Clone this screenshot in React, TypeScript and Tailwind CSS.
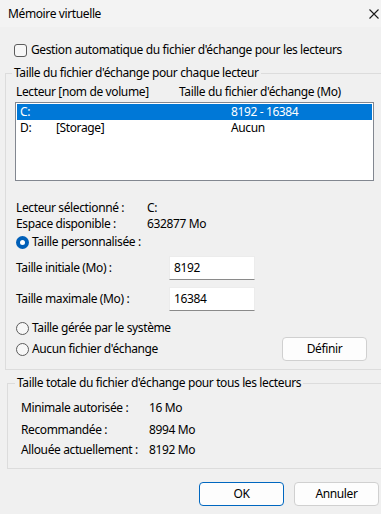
import React from 'react';

const font = { fontFamily: '"Segoe UI", "Noto Sans", "Liberation Sans", sans-serif' };

function Radio({ checked }: { checked?: boolean }) {
  if (checked) {
    return (
      <span className="flex h-[13px] w-[13px] items-center justify-center rounded-full bg-[#005fb8]">
        <span className="h-[5px] w-[5px] rounded-full bg-white" />
      </span>
    );
  }
  return <span className="h-[13px] w-[13px] rounded-full border border-[#5c5c5c] bg-[#f7f7f7]" />;
}

function Button({ label, primary }: { label: string; primary?: boolean }) {
  return (
    <button
      className={
        primary
          ? 'h-[24px] w-[85px] rounded-[4px] border border-[#0067c0] bg-[#fdfdfd] text-[12px] text-black'
          : 'h-[24px] w-[85px] rounded-[4px] border border-[#d0d0d0] bg-[#fdfdfd] text-[12px] text-black'
      }
    >
      {label}
    </button>
  );
}

export default function App() {
  return (
    <div
      className="h-[514px] w-[381px] overflow-hidden bg-[#f0f0f0] text-[12px] leading-[16px] tracking-[-0.38px] text-black"
      style={font}
    >
      {/* title bar */}
      <div className="flex h-[27px] items-center justify-between bg-[#f3f3f3] pl-[8px] pr-[1px]">
        <span>Mémoire virtuelle</span>
        <svg width="10" height="10" viewBox="0 0 10 10" className="mr-[1px]">
          <path d="M0.5 0.5 L9.5 9.5 M9.5 0.5 L0.5 9.5" stroke="#1a1a1a" strokeWidth="1.1" />
        </svg>
      </div>

      {/* auto checkbox */}
      <div className="ml-[14px] mt-[15px] flex h-[16px] items-center gap-[4px]">
        <span className="h-[13px] w-[13px] rounded-[3px] border border-[#5c5c5c] bg-[#f7f7f7]" />
        <span>Gestion automatique du fichier d'échange pour les lecteurs</span>
      </div>

      {/* per drive group */}
      <fieldset className="ml-[5px] mt-[7px] h-[305px] w-[381px] border border-[#dcdcdc]">
        <legend className="ml-[6px] px-[2px]">Taille du fichier d'échange pour chaque lecteur</legend>
        <div className="mt-[3px] flex pl-[10px]">
          <span className="w-[163px]">Lecteur [nom de volume]</span>
          <span>Taille du fichier d'échange (Mo)</span>
        </div>
        <div className="ml-[9px] mt-[2px] h-[79px] w-[359px] border border-[#828790] bg-white p-[1px]">
          <div className="flex h-[16px] items-center bg-[#0078d7] pl-[3px] text-white">
            <span className="w-[211px]">C:</span>
            <span>8192 - 16384</span>
          </div>
          <div className="flex h-[16px] items-center pl-[3px]">
            <span className="w-[36px]">D:</span>
            <span className="w-[175px]">[Storage]</span>
            <span>Aucun</span>
          </div>
        </div>

        <div className="ml-[10px] mt-[19px] flex">
          <span className="w-[131px]">Lecteur sélectionné :</span>
          <span>C:</span>
        </div>
        <div className="ml-[10px] flex">
          <span className="w-[131px]">Espace disponible :</span>
          <span>632877 Mo</span>
        </div>
        <div className="ml-[10px] mt-[2px] flex items-center gap-[3px]">
          <Radio checked />
          <span>Taille personnalisée :</span>
        </div>

        <div className="ml-[10px] mt-[6px] flex items-center">
          <span className="w-[153px]">Taille initiale (Mo) :</span>
          <div className="flex h-[24px] w-[86px] items-center border border-[#ececec] border-b-[#8a8a8a] bg-white pl-[4px]">8192</div>
        </div>
        <div className="ml-[10px] mt-[7px] flex items-center">
          <span className="w-[153px]">Taille maximale (Mo) :</span>
          <div className="flex h-[24px] w-[86px] items-center border border-[#ececec] border-b-[#8a8a8a] bg-white pl-[4px]">16384</div>
        </div>

        <div className="ml-[10px] mt-[9px] flex items-center gap-[3px]">
          <Radio />
          <span>Taille gérée par le système</span>
        </div>
        <div className="ml-[10px] mt-[1px] flex h-[24px] w-[351px] items-center">
          <div className="flex flex-1 items-center gap-[3px]">
            <Radio />
            <span>Aucun fichier d'échange</span>
          </div>
          <Button label="Définir" />
        </div>
      </fieldset>

      {/* totals group */}
      <fieldset className="ml-[7px] mt-[5px] h-[94px] w-[381px] border border-[#dcdcdc]">
        <legend className="ml-[7px] px-[2px]">Taille totale du fichier d'échange pour tous les lecteurs</legend>
        <div className="ml-[13px] mt-[9px] flex">
          <span className="w-[128px]">Minimale autorisée :</span>
          <span>16 Mo</span>
        </div>
        <div className="ml-[13px] mt-[6px] flex">
          <span className="w-[128px]">Recommandée :</span>
          <span>8994 Mo</span>
        </div>
        <div className="ml-[13px] mt-[4px] flex">
          <span className="w-[128px]">Allouée actuellement :</span>
          <span>8192 Mo</span>
        </div>
      </fieldset>

      <div className="mt-[13px] flex justify-end gap-[10px] pr-[2px]">
        <Button label="OK" primary />
        <Button label="Annuler" />
      </div>
    </div>
  );
}
